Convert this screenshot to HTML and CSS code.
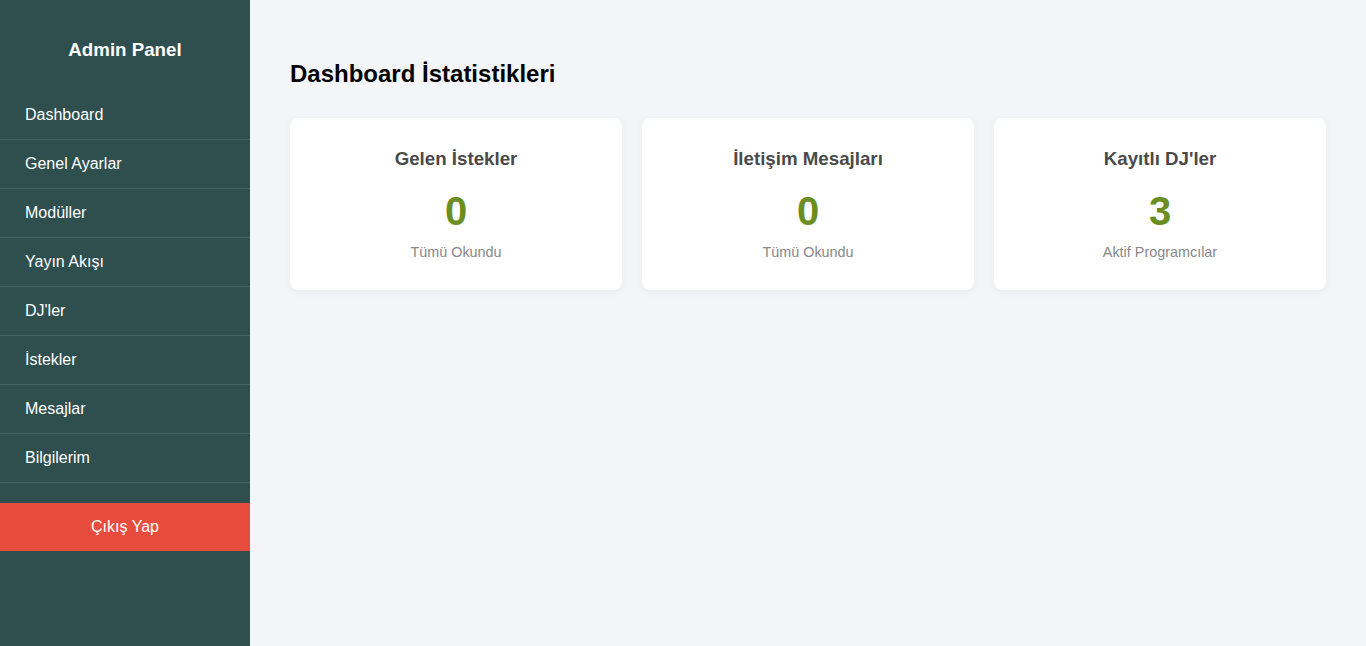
FILE: index.html
```html
<!DOCTYPE html>
<html lang="tr">
  <head>
    <meta charset="UTF-8" />
    <meta name="viewport" content="width=device-width, initial-scale=1.0" />
    <title>Admin Panel</title>
    <link rel="stylesheet" href="styles.css">
  </head>
  <body>
    <div class="sidebar">
      <h3>Admin Panel</h3>
      <ul class="menu">
        <li><a href="#">Dashboard</a></li>
        <li><a href="#">Genel Ayarlar</a></li>
        <li><a href="#">Modüller</a></li>
        <li><a href="#">Yayın Akışı</a></li>
        <li><a href="#">DJ'ler</a></li>
        <li><a href="#">İstekler</a></li>
        <li><a href="#">Mesajlar</a></li>
        <li><a href="#">Bilgilerim</a></li>
      </ul>
      <a href="#" class="logout">Çıkış Yap</a>
    </div>

    <div class="main">
      <h1>Dashboard İstatistikleri</h1>
      <div class="stats">
        <div class="card">
          <h3>Gelen İstekler</h3>
          <div class="number">0</div>
          <p>Tümü Okundu</p>
        </div>
        <div class="card">
          <h3>İletişim Mesajları</h3>
          <div class="number">0</div>
          <p>Tümü Okundu</p>
        </div>
        <div class="card">
          <h3>Kayıtlı DJ'ler</h3>
          <div class="number">3</div>
          <p>Aktif Programcılar</p>
        </div>
      </div>
    </div>
  </body>
</html>
```

FILE: styles.css
```css
* {
  margin: 0;
  padding: 0;
  box-sizing: border-box;
}

body {
  display: flex;
  min-height: 100vh;
  font-family: "Liberation Sans", Arial, sans-serif;
  background: #f4f5f9;
}

.sidebar {
  width: 250px;
  flex-shrink: 0;
  min-height: 100vh;
  background: #2f4f4f;
  color: white;
}

.sidebar h3 {
  text-align: center;
  font-size: 18.72px;
  line-height: 23px;
  margin: 38px 0 30px;
}

.menu {
  list-style: none;
}

.menu li {
  border-bottom: 1px solid #436262;
}

.menu a {
  display: block;
  padding: 15px 25px;
  color: white;
  text-decoration: none;
  font-size: 16px;
  line-height: 18px;
}

.logout {
  display: block;
  margin-top: 20px;
  padding: 15px 0;
  background: #e74c3c;
  color: white;
  text-align: center;
  text-decoration: none;
  font-size: 16px;
  line-height: 18px;
}

.main {
  flex: 1;
  padding: 40px;
}

.main h1 {
  font-size: 24px;
  line-height: 28px;
  margin: 20px 0 30px;
  color: #000;
}

.stats {
  display: grid;
  grid-template-columns: repeat(3, 1fr);
  gap: 20px;
}

.card {
  background: white;
  border-radius: 8px;
  box-shadow: 0 2px 8px rgba(0, 0, 0, 0.05);
  padding: 30px 20px;
  text-align: center;
}

.card h3 {
  font-size: 18.72px;
  line-height: 21px;
  color: #4a4a4a;
}

.card .number {
  font-size: 40px;
  font-weight: bold;
  line-height: 46px;
  margin: 19px 0 10px;
  color: #6b8e23;
}

.card p {
  font-size: 14.4px;
  line-height: 16px;
  color: #888;
}
```
